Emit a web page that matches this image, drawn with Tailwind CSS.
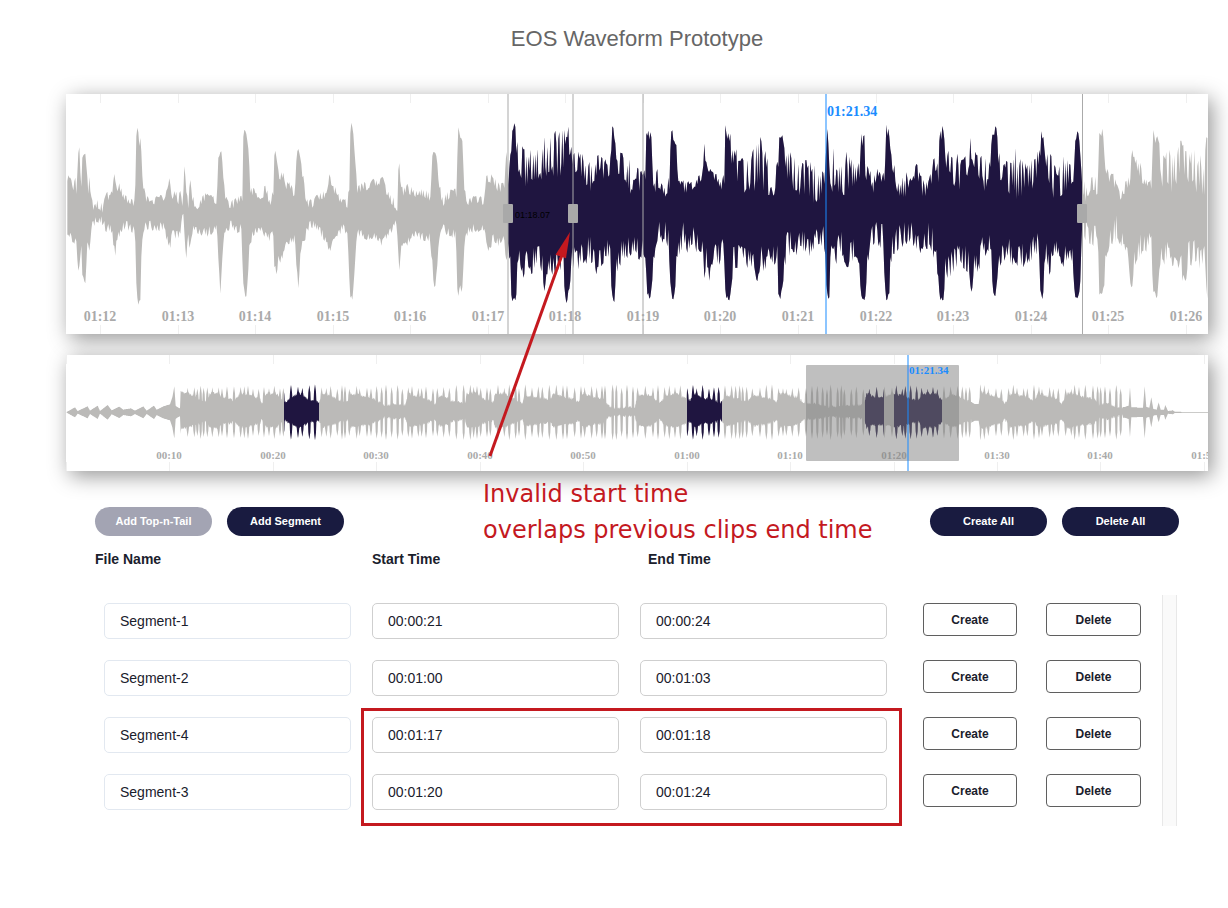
<!DOCTYPE html>
<html lang="en">
<head>
<meta charset="utf-8">
<title>EOS Waveform Prototype</title>
<script src="https://cdn.jsdelivr.net/npm/@tailwindcss/browser@4"></script>
</head>
<body class="bg-white font-['Liberation_Sans',Arial,sans-serif] text-[#1a202c]">
<main class="relative min-h-screen pl-[66px] pr-5 pt-6 pb-20">
  <h1 class="text-center text-[22px] leading-[30px] text-[#666]">EOS Waveform Prototype</h1>

  <section aria-label="Zoomed waveform" class="mt-10 bg-white shadow-[4px_5px_20px_rgba(0,0,0,0.42)]">
    <svg id="zoomview" class="block h-auto w-full" viewBox="0 0 1142 240">
      <defs><clipPath id="zc"><rect x="442" y="0" width="574.5" height="240"/></clipPath></defs>
      <g id="zticks" fill="#efefef"></g>
      <g transform="scale(0.33333) translate(0 -30)"><path class="fill-[#bbbab8]" data-wave="zoom"/></g>
      <g clip-path="url(#zc)"><g transform="scale(0.33333) translate(0 -30)"><path class="fill-[#1f1540]" data-wave="zoom"/></g></g>
      <g id="zlabels" class="text-[14px] font-bold font-['Liberation_Serif',serif] fill-[#aaa]" text-anchor="middle"></g>
      <g fill="#aaa" fill-opacity=".5">
        <rect x="441" width="2" height="240"/><rect x="506" width="2" height="240"/><rect x="576" width="2" height="240"/>
      </g>
      <rect x="1016" width="1" height="240" fill="#aaa"/>
      <g fill="#a9a9a9"><rect x="437" y="110" width="10" height="19" rx="1"/><rect x="502" y="110" width="10" height="19" rx="1"/><rect x="1011" y="110" width="10" height="19" rx="1"/></g>
      <text x="449" y="124" class="text-[9px] fill-black">01:18.07</text>
      <rect x="759" width="2" height="240" fill="#1a8cff" fill-opacity=".5"/>
      <text x="761" y="22" class="text-[14px] font-bold font-['Liberation_Serif',serif] fill-[#1a8cff]">01:21.34</text>
    </svg>
  </section>

  <section aria-label="Waveform overview" class="mt-[21px] bg-white shadow-[4px_5px_20px_rgba(0,0,0,0.42)]">
    <svg id="overview" class="block h-auto w-full" viewBox="0 0 1142 116">
      <defs><clipPath id="oc"><rect x="218" width="35" height="116"/><rect x="621" width="35" height="116"/><rect x="799" width="19" height="116"/><rect x="828" width="48" height="116"/></clipPath></defs>
      <g id="oticks" fill="#efefef"></g>
      <g transform="scale(0.33333) translate(0 -30)"><path class="fill-[#bbbab8]" data-wave="over"/></g>
      <g clip-path="url(#oc)"><g transform="scale(0.33333) translate(0 -30)"><path class="fill-[#1f1540]" data-wave="over"/></g></g>
      <g id="olabels" class="text-[11px] font-bold font-['Liberation_Serif',serif] fill-[#aaa]" text-anchor="middle"></g>
      <rect x="740" y="10" width="153" height="96" rx="1" fill="#7f7f7f" fill-opacity=".5"/>
      <rect x="841" width="2" height="116" fill="#1a8cff" fill-opacity=".5"/>
      <text x="843" y="19" class="text-[11px] font-bold font-['Liberation_Serif',serif] fill-[#1a8cff]">01:21.34</text>
    </svg>
  </section>

  <section aria-label="Segments" class="px-[29px] pt-9">
    <div class="flex gap-[15px] text-[11px] font-bold text-white">
      <button disabled class="h-[29px] w-[117px] rounded-full bg-[#a3a4b3]">Add Top-n-Tail</button>
      <button class="h-[29px] w-[117px] rounded-full bg-[#191b40]">Add Segment</button>
      <button class="ml-auto h-[29px] w-[117px] rounded-full bg-[#191b40]">Create All</button>
      <button class="h-[29px] w-[117px] rounded-full bg-[#191b40]">Delete All</button>
    </div>
    <div class="flex items-start pr-[2px]">
      <table class="w-0 flex-1 table-fixed border-collapse text-left text-[14px]">
        <colgroup><col><col><col><col class="w-[130px]"><col class="w-[112px]"></colgroup>
        <thead>
          <tr class="h-[59px] align-top leading-5">
            <th class="pt-[13px]">File Name</th><th class="pt-[13px] pl-[9px]">Start Time</th><th class="pt-[13px] pl-[17px]">End Time</th><td></td><td></td>
          </tr>
        </thead>
        <tbody id="rows"></tbody>
      </table>
      <div class="mt-[59px] ml-[21px] h-[231px] w-[15px] border-x border-[#e8e8e8] bg-[#fafafa]"></div>
    </div>
  </section>

  <!-- Review annotations drawn over the page -->
  <svg class="pointer-events-none absolute left-[480px] top-[225px] h-[240px] w-[100px]" viewBox="0 0 100 240" aria-hidden="true">
    <path d="M10 231 82 30" stroke="#c4191f" stroke-width="3"/>
    <path d="M90 7 75.500 29.700 86 33.200Z" fill="#c4191f"/>
  </svg>
  <p class="pointer-events-none absolute left-[483px] top-[476px] whitespace-nowrap font-['DejaVu_Sans',Verdana,sans-serif] text-[24px] leading-9 text-[#c4191f]">Invalid start time<br>overlaps previous clips end time</p>
  <div class="pointer-events-none absolute left-[361px] right-[326px] top-[708px] h-[118px] border-3 border-[#c4191f]"></div>
</main>

<script>
// Segment rows
const segments = [
  ['Segment-1', '00:00:21', '00:00:24'],
  ['Segment-2', '00:01:00', '00:01:03'],
  ['Segment-4', '00:01:17', '00:01:18'],
  ['Segment-3', '00:01:20', '00:01:24'],
];
document.getElementById('rows').innerHTML = segments.map(([n, s, e]) => `
<tr class="h-[57px] align-top">
  <td class="pt-2 pl-[9px] pr-3"><input aria-label="${n} file name" value="${n}" class="h-9 w-full rounded-[5px] border border-[#e2e8f0] px-[15px]"></td>
  <td class="pt-2 pl-[9px] pr-3"><input aria-label="${n} start time" value="${s}" class="h-9 w-full rounded-[5px] border border-[#cfcfcf] px-[15px]"></td>
  <td class="pt-2 pl-[9px] pr-3"><input aria-label="${n} end time" value="${e}" class="h-9 w-full rounded-[5px] border border-[#cfcfcf] px-[15px]"></td>
  <td class="pt-2 pl-6 pr-3"><button class="h-[33px] w-full rounded-[4px] border border-[#5f5f5f] text-[12px] font-bold">Create</button></td>
  <td class="pt-2 pl-[17px]"><button class="h-[33px] w-full rounded-[4px] border border-[#5f5f5f] text-[12px] font-bold">Delete</button></td>
</tr>`).join('');

// Time axes
function axis(prefix, first, step, count, height, baseline, name) {
  let ticks = '', labels = '';
  for (let i = 0; i < count; i++) {
    const x = Math.round(first + i * step);
    ticks += `<rect x="${x}" width="1" height="9"/><rect x="${x}" y="${height - 9}" width="1" height="9"/>`;
    if (name(i)) labels += `<text x="${x}" y="${baseline}">${name(i)}</text>`;
  }
  document.getElementById(prefix + 'ticks').innerHTML = ticks;
  document.getElementById(prefix + 'labels').innerHTML = labels;
}
axis('z', 34, 77.55, 15, 240, 227, i => '01:' + (12 + i));
axis('o', 0, 103.44, 12, 116, 104, i => i ? (i < 6 ? '00:' + i * 10 : '01:' + (i === 6 ? '00' : (i - 6) * 10)) : '');

let seed = 7;
const rnd = () => (seed = (seed * 16807) % 2147483647) / 2147483647;
const parse = (s, dx) => s.trim().split(/\s+/).map(p => { const [x, y] = p.split(',').map(Number); return [x + dx, y]; });
function at(pts, x) {
  if (x <= pts[0][0]) return pts[0][1];
  for (let i = 1; i < pts.length; i++) if (x <= pts[i][0]) {
    const [a, b] = [pts[i - 1], pts[i]];
    return b[0] === a[0] ? b[1] : a[1] + (b[1] - a[1]) * (x - a[0]) / (b[0] - a[0]);
  }
  return pts[pts.length - 1][1];
}

// Peak envelopes, three units per pixel
const top_ = [
 ...parse('22,270 36,285 38,330 45,275 50,310 57,165 63,310 67,215 76,208 82,280 86,320 88,275 96,350 105,360 112,350 128,360 142,318 152,330 165,258 170,320 178,300 187,320 196,335 225,345 229,150 233,118 238,180 242,155 247,270 255,325 270,350 290,330 305,335 322,310 328,285 337,325 346,310 355,335 362,315 368,370 374,215 379,320 385,350 390,280 398,335 413,355 430,325 450,330 470,335 475,215 480,205 485,195 490,280 500,345 520,348 540,330 547,330 549,160 554,125 560,155 566,200 571,300 585,320 610,320 615,300 625,330 630,345 640,310 643,215 646,195 652,240 660,270 670,260 676,300 690,290 705,320 710,200 715,190 725,240 735,310 740,340 755,350 775,320 795,325 802,290 810,255 817,300 830,305 838,335 862,345 868,300 870,150', -18),
 ...parse('5,108 10,150 16,230 22,305 45,290 48,320 70,285 97,275 108,300 115,325 135,345 142,360 146,215 152,280 158,315 170,300 190,310 230,320 240,330 247,210 255,195 260,220 268,290 278,345 295,320 315,315 320,320 324,118 332,160 337,165 343,310 355,340 375,335 403,335 410,265 430,275 440,295 455,300 463,290 470,190 475,280 480,230 485,140 490,115 496,125 503,160 518,185 530,190 545,165 560,200 578,160 595,190 608,130 620,140 640,150 650,112 656,125 660,190 675,190 700,220 725,230 745,215 770,230 782,220 787,130 793,130 798,210 805,250 812,195 825,225 850,240 868,255', 852),
 ...parse('0,260 15,250 18,150 30,135 36,170 40,300 50,245 62,285 78,310 88,270 93,140 102,135 108,165 112,250 125,290 145,295 170,285 185,265 193,178 203,215 208,250 225,265 245,290 252,260 256,122 262,160 270,130 276,205 290,205 310,190 330,215 346,155 365,170 375,210 400,230 412,240 416,140 422,128 430,160 440,210 460,210 475,240 490,240 510,220 530,250 555,260 562,130 570,240 580,200 595,260 615,210 635,225 650,250 660,230 665,140 672,120 677,240 687,250 700,290 710,235 725,270 735,260 738,120 745,130 752,200 765,240 775,290 800,270 815,290 830,235 845,280 862,290', 1722),
 ...parse('0,290 10,260 22,190 30,240 35,150 42,122 48,150 55,200 75,185 95,230 115,210 127,165 140,200 165,195 175,235 188,215 193,120 203,125 212,150 218,220 245,230 265,200 285,235 310,235 330,205 337,160 343,124 350,190 365,200 390,250 415,210 435,220 440,135 452,135 458,230 463,290 480,290 500,275 510,280 514,135 523,135 530,190 540,260 560,275 575,320 600,280 607,280 611,185 620,215 635,230 645,280 670,290 676,130 683,185 688,125 695,190 705,220 715,185 735,200 752,175 768,160 785,210 805,205 830,240 834,150 840,115', 2586)];
const inner = [
 ...parse('475,280 483,200 490,125 496,130 502,250 515,290 545,270 570,270 600,245 625,260 640,240 648,150 654,140 660,240 680,250 705,280 725,310 745,240 770,280 785,260 790,135 795,180 802,270 812,250 840,310 860,270', 852),
 ...parse('0,310 15,300 20,200 30,140 36,200 42,345 55,300 78,325 88,300 93,150 105,160 115,280 135,318 165,300 185,280 193,200 205,250 245,310 253,300 257,140 263,170 271,150 277,310 310,300 350,290 380,310 412,320 418,150 425,150 440,270 490,330 530,345 555,290 564,170 572,300 610,310 645,310 662,260 670,150 678,290 687,260 697,325 712,270 732,300 739,140 746,150 755,240 775,325 800,320 828,260 850,340', 1722),
 ...parse('0,310 12,290 22,240 30,300 36,160 48,140 55,250 75,290 105,310 127,220 150,250 170,310 185,270 193,140 203,140 212,270 235,290 260,330 290,300 325,290 337,200 345,135 355,250 375,325 400,340 435,290 442,160 455,160 463,300 472,350 490,300 508,325 515,140 524,150 535,270 560,300 575,335 605,300 612,200 630,250 645,290 670,300 678,150 690,150 702,300 735,300 770,260 800,300 832,310 835,180 840,130', 2586)];
const bottom = [
 ...parse('22,450 35,475 48,480 57,580 63,480 67,570 76,605 82,480 88,515 95,430 110,420 128,420 140,450 148,440 155,445 165,520 172,470 185,440 200,430 215,450 225,440 229,600 233,668 241,650 245,500 253,440 270,430 285,445 310,435 322,480 330,500 335,460 350,460 360,465 365,410 371,410 378,545 383,460 388,490 400,440 415,450 440,455 470,440 476,540 481,630 487,520 495,450 510,430 525,445 545,440 549,600 557,655 563,600 568,490 580,455 600,445 625,470 640,460 643,550 650,580 655,520 662,540 672,500 690,480 705,470 710,560 716,625 722,510 728,470 731,500 740,440 755,430 775,445 797,475 809,515 815,475 830,460 850,440 863,450 869,620', -18),
 ...parse('0,640 8,650 14,560 20,450 45,470 70,460 97,490 115,460 140,420 148,555 155,490 168,500 185,460 200,465 240,470 248,560 254,630 262,540 268,480 280,440 300,460 318,460 323,650 330,610 336,630 343,490 355,450 375,440 400,445 410,480 419,515 428,470 445,490 460,460 470,540 474,490 480,560 485,650 498,650 505,540 520,570 540,560 575,550 583,620 592,570 625,570 640,550 645,640 650,660 660,600 668,540 680,550 700,540 720,520 735,570 750,545 775,510 782,560 785,640 793,655 800,560 812,540 835,510 868,520', 852),
 ...parse('0,510 15,525 22,630 30,650 37,590 45,510 62,460 85,490 92,600 98,655 105,620 113,520 130,480 145,500 170,495 185,500 192,590 200,530 208,580 215,530 235,545 252,520 257,640 268,650 275,610 280,540 320,540 345,560 351,600 360,545 375,570 395,530 412,540 415,630 422,645 430,590 440,500 465,515 490,490 515,520 535,490 555,495 560,630 568,650 573,520 583,545 600,500 618,545 640,520 657,530 663,640 675,650 682,560 690,480 710,475 730,490 738,660 748,630 755,530 770,490 800,470 815,480 832,500 862,495', 1722),
 ...parse('0,480 12,490 20,560 30,570 35,650 47,650 52,570 70,570 95,540 120,555 132,635 137,560 145,580 160,520 190,500 194,630 203,640 210,560 230,525 260,535 293,550 305,520 330,510 337,620 344,652 352,540 368,575 375,520 405,540 435,540 440,640 452,645 460,560 464,440 485,485 510,470 513,630 519,640 530,600 537,510 565,460 600,510 611,630 618,550 640,510 670,500 675,620 687,650 695,550 710,530 745,540 773,600 780,540 800,530 825,560 833,540 836,640 840,650', 2586)];
function zoomPath() {
  const up = [], down = [];
  let notch = false, gap = false;
  for (let x = 4; x <= 3426; x += 3) {
    const o = at(top_, x), b = at(bottom, x), busy = x > 1327;
    notch = notch ? rnd() < 0.45 : rnd() < 0.5;
    gap = gap ? rnd() < 0.35 : rnd() < 0.45;
    const deep = busy ? Math.max(o, at(inner, x) + 12) : o + (o > 240 ? 24 : 6);
    up.push(`${x} ${(o + (deep - o) * (notch ? 0.75 + rnd() * 0.4 : rnd() * 0.45 - 0.1)).toFixed(0)}`);
    const cut = b > 590 ? 10 : busy ? 62 : 22;
    down.push(`${x} ${(b - cut * (gap ? 0.6 + rnd() * 0.5 : rnd() * 0.5 - 0.2)).toFixed(0)}`);
  }
  return 'M' + up.join('L') + 'L' + down.reverse().join('L') + 'Z';
}

const body = [
 ...parse('20,1 45,15 53,4 83,18 90,5 113,20 120,4 143,22 155,6 178,17 190,8 213,12 225,5 250,18 260,5 282,20 290,8 310,18 330,24 337,45 343,78 347,20 353,15 360,12 362,65 385,60 410,50 430,38 440,38 450,60 470,62 490,48 515,45 520,35 540,60 570,55 600,45 605,30 620,60 650,60 668,40 675,35 700,50 715,62 735,50 750,40 776,35 790,60 820,50 840,40 865,35 870,60 900,55 930,50 960,35 975,22 1000,30 1035,25 1045,60 1080,50 1110,40 1125,30 1140,55 1169,45', -18),
 ...parse('0,40 45,30 50,60 75,62 100,45 130,35 135,60 165,60 200,40 218,30 222,55 250,50 290,45 300,40 310,60 340,50 370,45 385,35 400,60 430,50 460,45 475,25 490,15 520,18 555,20 562,55 600,55 630,30 645,55 680,60 710,45 720,40 735,60 760,45 790,45 810,30 830,55 860,45 890,35 910,55 960,45 980,35 990,60 1040,50 1060,35 1070,30 1100,30 1130,22', 1152),
 ...parse('0,20 60,25 95,25 110,35 115,60 140,50 165,50 200,60 235,50 270,38 285,60 320,60 345,40 370,60 400,50 440,25 452,25 458,65 490,55 520,45 530,30 550,60 600,50 618,35 630,60 690,45 700,30 720,62 770,50 800,45 810,25 840,30 870,18 890,16 902,20 906,75 910,15 945,14 950,78 955,16 964,14 970,45 976,10 986,8 992,30 998,8 1008,8 1012,22 1020,4 1035,6 1040,2 1080,1 1142,1', 2286)];
function overPath() {
  const up = [], down = [];
  let next = 362, s = -9, height = 0;
  for (let x = 2; x <= 3426; x += 1) {
    if (x >= next) { s = x; height = 70 + rnd() * 14; next = x + 9 + Math.floor(rnd() * 15); }
    const base = at(body, x);
    const quiet = x < 345 || x > 3170 || (x > 2715 && x < 2742);
    let h = base, low = base * (quiet ? 1 : 0.82);
    if (!quiet) {
      const d = Math.abs(x - s - 3);
      if (d <= 3) { h = Math.max(h, height * (1 - d * 0.09)); low = Math.max(low, height * (1 - d * 0.09)); }
      else { h -= rnd() * 8; low -= rnd() * 8; }
    }
    up.push(`${x} ${(202 - h).toFixed(0)}`);
    down.push(`${x} ${(202 + Math.max(1, low)).toFixed(0)}`);
  }
  return 'M' + up.join('L') + 'L' + down.reverse().join('L') + 'Z';
}
const paths = { zoom: zoomPath(), over: overPath() };
document.querySelectorAll('[data-wave]').forEach(p => p.setAttribute('d', paths[p.dataset.wave]));
</script>
</body>
</html>
